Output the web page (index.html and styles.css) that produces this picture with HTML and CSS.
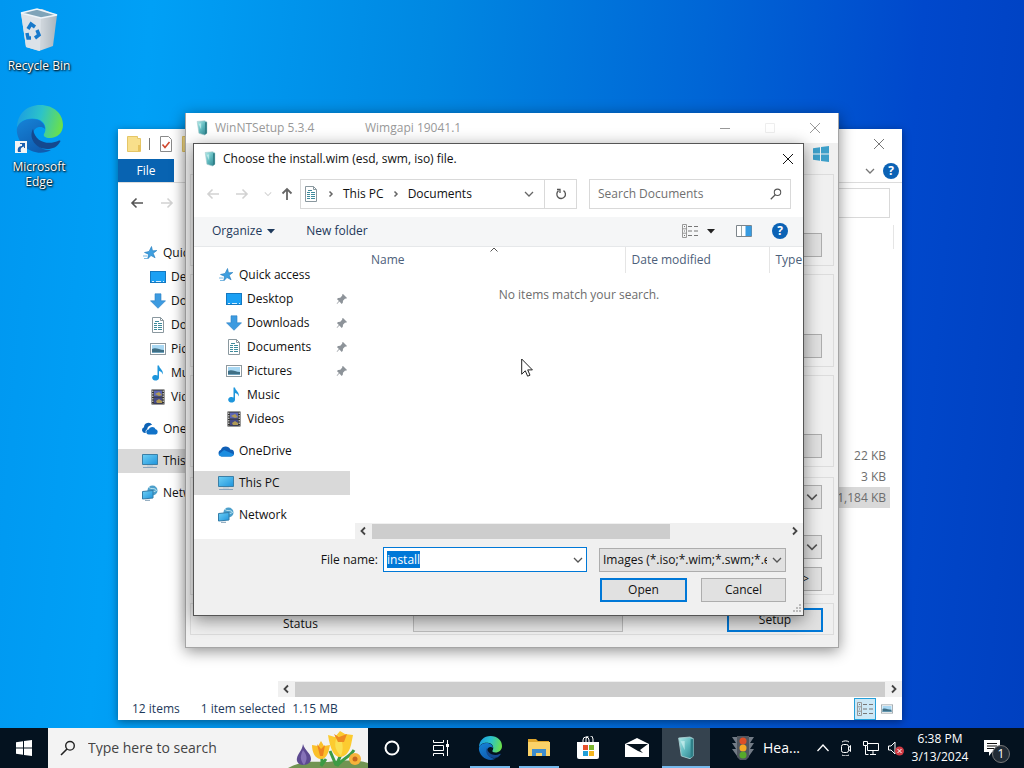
FILE: index.html
```html
<!DOCTYPE html>
<html lang="en">
<head>
  <meta charset="UTF-8">
  <meta name="viewport" content="width=device-width, initial-scale=1.0">
  <title>WinNTSetup</title>
  <link rel="stylesheet" href="styles.css">
</head>
<body>
  <!-- Shared icons -->
  <svg class="defs" aria-hidden="true">
    <defs>
      <linearGradient id="screenFill" x1="0" y1="0" x2="1" y2="1">
        <stop offset="0" stop-color="#6fd0f5"/><stop offset="1" stop-color="#1f94dc"/>
      </linearGradient>
      <linearGradient id="edgeTop" x1="0" y1="0.3" x2="1" y2="0.5">
        <stop offset="0" stop-color="#1b9de2"/><stop offset="0.5" stop-color="#2cc3c9"/><stop offset="1" stop-color="#6be04a"/>
      </linearGradient>
      <linearGradient id="edgeBody" x1="0" y1="0" x2="0.6" y2="1">
        <stop offset="0" stop-color="#1684d8"/><stop offset="1" stop-color="#0f5cb0"/>
      </linearGradient>
      <linearGradient id="boxFill" x1="0" y1="0" x2="1" y2="1">
        <stop offset="0" stop-color="#b5ecea"/><stop offset="0.5" stop-color="#5fb9be"/><stop offset="1" stop-color="#2b7f8c"/>
      </linearGradient>
      <linearGradient id="binFill" x1="0" y1="0" x2="1" y2="0">
        <stop offset="0" stop-color="#e4e9ee"/><stop offset="0.6" stop-color="#cdd4da"/><stop offset="1" stop-color="#a9b4bd"/>
      </linearGradient>
    </defs>
    <symbol id="star" viewBox="0 0 16 16"><path d="M9.500 1.500l1 4.300 4.300-.3-3.600 2.800 1.900 4.500-4.100-2.300-3.300 3.400.8-4.700-4-1.700 4.600-1.100z" fill="#3e9fe0" stroke="#2078bb" stroke-width=".6"/><path d="M1 11h4M2 13.500h3" stroke="#79b9e4"/></symbol>
    <symbol id="desktop" viewBox="0 0 16 16"><rect x=".5" y="2.500" width="15" height="11" fill="#1ba0f4" stroke="#1478c0"/><path d="M2 12.500h2M6 12.500h5M13 12.500h1" stroke="#d8f0ff"/></symbol>
    <symbol id="download" viewBox="0 0 16 16"><path d="M5 .8h6v7h4.500L8 15.300.5 7.800H5z" fill="#3d9be0" stroke="#2a7fc4" stroke-width=".6"/></symbol>
    <symbol id="document" viewBox="0 0 16 16"><path d="M2.500.5h8l3 3v12h-11z" fill="#fff" stroke="#8a989f"/><path d="M10.500.5v3h3" fill="none" stroke="#8a989f"/><path d="M4 6.500h3M4 8.500h3M8 6.500h4M8 8.500h4M4 10.500h3M8 10.500h4M4 12.500h3M8 12.500h4M5 4.500h4" stroke="#3f8b9c"/></symbol>
    <symbol id="picture" viewBox="0 0 16 16"><rect x=".5" y="2.500" width="15" height="11" fill="#fff" stroke="#8e999f"/><path d="M2 4h12v8H2z" fill="#a9d8f3"/><path d="M2 8c4-2 7 1 12 1v3H2z" fill="#3f6f85"/><path d="M2 11h12v1H2z" fill="#6fa3be"/></symbol>
    <symbol id="music" viewBox="0 0 16 16"><path d="M7.500.5H9c.4 3.500 5 4.500 3.500 9-.3-2-1.500-3.200-3.500-3.500V13a3.400 2.800 0 1 1-1.500-2.600z" fill="#1e96dc"/></symbol>
    <symbol id="video" viewBox="0 0 16 16"><path d="M1.500.5h13v15h-13z" fill="#333"/><path d="M4 1.500h8v6H4z" fill="#5c66b5"/><path d="M4 8.500h8v6H4z" fill="#454a86"/><path d="M5 5l4-2 3 3-3 1zM6 12l3-2 3 2v2H7z" fill="#b09a55"/><path d="M2.800 1.500v13M13.200 1.500v13" stroke="#eee" stroke-dasharray="1.500 1"/></symbol>
    <symbol id="onedrive" viewBox="0 0 16 16"><path d="M3.500 13.500a3.500 3.500 0 0 1-.6-6.800A5.200 5.200 0 0 1 12.300 6.500a3.500 3.500 0 0 1 .4 7z" fill="#0f5fb6"/><path d="M6 7l9.700 4.200a3.200 3.200 0 0 1-3 2.300H3.500a3.400 3.400 0 0 1-3-2z" fill="#1b8de0"/></symbol>
    <symbol id="clouds" viewBox="0 0 16 16"><path d="M2.800 12A3 3 0 0 1 2 6.200 4.400 4.400 0 0 1 10.200 4C7 4 5.300 6.500 5.300 8.200 3.600 9 3.300 10.500 3.800 12z" fill="#0c62b5"/><path d="M7 13.500a2.500 2.500 0 0 1-.4-5 3.700 3.700 0 0 1 7-.2 2.700 2.700 0 0 1 .2 5.200z" fill="#1172c8"/></symbol>
    <symbol id="pc" viewBox="0 0 16 16"><path d="M.5 1.500h15v10H.5z" fill="url(#screenFill)" stroke="#3b7fa6"/><path d="M1 14.500h14" stroke="#8aa4bb"/><path d="M5 13h6" stroke="#b4c5d3"/></symbol>
    <symbol id="network" viewBox="0 0 16 16"><circle cx="10.500" cy="5.500" r="5" fill="#4c9fcb"/><path d="M7 2.500c2 2 4 0 7 2M9 9c1-3 4-2 6-4" stroke="#b9e2ef" fill="none"/><path d="M.5 6.500l10.500-1v7.500l-10.500 1z" fill="url(#screenFill)" stroke="#337ca8"/><path d="M3 15.300h5" stroke="#7d9db4"/></symbol>
    <symbol id="pin" viewBox="0 0 12 12"><path d="M7 1l4 4-1 .8-.9-.2L7 7.800l-.2 2L5.700 11 3.400 8.600 1 11l-.3-.4L2.900 8 .9 5.900 2.200 5l2.100-.2 2-2.200L6 1.800z" fill="#8d9399"/></symbol>
    <symbol id="box" viewBox="0 0 16 18"><path d="M2.500 1.500L11 .8l2.500 1.200v13L11 17l-6.500-2z" fill="url(#boxFill)" stroke="#a5c9cc" stroke-width=".7"/><path d="M11.500 2.500v14l2-1.500V2.300z" fill="#2f7f87"/><path d="M4 4l3-.3v7z" fill="#dbf8f6" opacity=".6"/></symbol>
    <symbol id="edge" viewBox="0 0 48 48"><path d="M2 23C2 9 12 0 25 0c14 0 23 9 23 20 0 8-6 13-13 13-5 0-7-2-6-4 3-4 2-13-7-15C13 12 4 16 2 23z" fill="url(#edgeTop)"/><path d="M2 23c2-6 8-9 15-9 9 0 13 5 13 10-4-4-12-2-12 6 0 9 9 16 18 15-8 5-20 3-27-4-5-5-8-12-7-18z" fill="url(#edgeBody)"/><path d="M18 24c-5 9 3 20 14 20 6 0 10-2 13-7 1-1 0-2-2-1-9 4-23 2-25-12z" fill="#14498f"/></symbol>
    <symbol id="winlogo" viewBox="0 0 16 16"><path d="M0 2.300l7-1v6.200H0zM8 1.100L16 0v7.500H8zM0 8.500h7v6.200l-7-1zM8 8.500h8V16l-8-1.100z" fill="currentColor"/></symbol>
    <symbol id="close" viewBox="0 0 12 12"><path d="M1 1l10 10M11 1L1 11" stroke="currentColor" fill="none"/></symbol>
    <symbol id="down" viewBox="0 0 10 10"><path d="M1 3l4 4 4-4" stroke="currentColor" fill="none" stroke-width="1.300"/></symbol>
    <symbol id="right" viewBox="0 0 10 10"><path d="M3 1.500L6.500 5 3 8.500" stroke="currentColor" fill="none" stroke-width="1.800"/></symbol>
    <symbol id="left" viewBox="0 0 10 10"><path d="M7 1.500L3.500 5 7 8.500" stroke="currentColor" fill="none" stroke-width="1.800"/></symbol>
    <symbol id="crumb" viewBox="0 0 10 10"><path d="M3.500 2.500L6 5 3.500 7.500" stroke="currentColor" fill="none" stroke-width="1.500"/></symbol>
    <symbol id="back" viewBox="0 0 14 12"><path d="M13 6H2M6.500 1.500L2 6l4.500 4.500" stroke="currentColor" fill="none" stroke-width="1.600"/></symbol>
    <symbol id="forward" viewBox="0 0 14 12"><path d="M1 6h11M7.500 1.500L12 6l-4.500 4.500" stroke="currentColor" fill="none" stroke-width="1.600"/></symbol>
    <symbol id="up" viewBox="0 0 12 14"><path d="M6 13V2M1.500 6.500L6 2l4.500 4.500" stroke="currentColor" fill="none" stroke-width="1.800"/></symbol>
    <symbol id="caret" viewBox="0 0 8 8"><path d="M0 2h8L4 6.500z" fill="currentColor"/></symbol>
    <symbol id="folder" viewBox="0 0 14 16"><path d="M.5.5h10v2h3v13h-13z" fill="#f8df8b" stroke="#e5c667"/><path d="M11 9h3v6h-3z" fill="#e7c25c"/></symbol>
    <symbol id="lens" viewBox="0 0 16 16"><circle cx="10" cy="5.800" r="4.300" stroke="currentColor" fill="none" stroke-width="1.400"/><path d="M7 9l-6 6" stroke="currentColor" stroke-width="1.600"/></symbol>
    <symbol id="details" viewBox="0 0 18 14"><path d="M1.500.5h4v13h-4zM1.500 4.800h4M1.500 9.200h4" fill="none" stroke="#999"/><path d="M3 2.500h1M3 7h1M3 11.500h1M7 2.500h4M13 2.500h4M7 7h4M13 7h4M7 11.500h4M13 11.500h4" stroke="#777"/></symbol>
  </svg>

  <main class="desktop">
    <nav class="shortcuts">
      <a href="#" class="shortcut">
        <svg viewBox="0 0 40 44" class="shortcut-icon"><path d="M2 5l5 34 13 4 14-5 4-31-15-6z" fill="url(#binFill)"/><path d="M2 5l20 4-1 34-14-4z" fill="#dce2e8"/><path d="M2 5L18 1l20 6-16 3z" fill="#7fa4b9" stroke="#eef5fa" stroke-width="1.500"/><g fill="none" stroke="#1779cb" stroke-width="3.500"><path d="M9 21l3-5 4 3"/><path d="M18 22l2 5-4 3"/><path d="M12 30H9l-1-5"/></g></svg>
        <span>Recycle Bin</span>
      </a>
      <a href="#" class="shortcut">
        <span class="edge-wrap">
          <svg class="edge-icon"><use href="#edge"/></svg>
          <svg class="link-arrow" viewBox="0 0 12 12"><rect width="12" height="12" fill="#f4f4f4"/><path d="M3 11c-1-4 1-6 4-6V3H5V2h5v5H9V5.500C6 6 5 8 6 11z" fill="#1d5fae"/></svg>
        </span>
        <span>Microsoft Edge</span>
      </a>
    </nav>

    <!-- File Explorer -->
    <section class="window explorer">
      <header class="explorer-title">
        <svg class="i-folder"><use href="#folder"/></svg>
        <span class="bar"></span>
        <svg class="i-check" viewBox="0 0 12 16"><path d="M.5.5h8l3 3v12H.5z" fill="#fff" stroke="#8a8a8a"/><path d="M2.500 8.500l2.500 3L9.500 6" fill="none" stroke="#d0492f" stroke-width="1.600"/></svg>
        <svg class="i-folder"><use href="#folder"/></svg>
        <button class="icon-button push gray" aria-label="Close"><svg class="i12"><use href="#close"/></svg></button>
      </header>
      <div class="ribbon">
        <button class="file-tab">File</button>
        <svg class="i10 push gray"><use href="#down"/></svg>
        <button class="help" aria-label="Help">?</button>
      </div>
      <div class="explorer-nav">
        <button class="icon-button" aria-label="Back"><svg class="i14"><use href="#back"/></svg></button>
        <button class="icon-button faint" aria-label="Forward"><svg class="i14"><use href="#forward"/></svg></button>
        <input class="explorer-search" type="text" aria-label="Search">
      </div>
      <div class="explorer-body">
        <ul class="tree explorer-tree">
          <li><svg><use href="#star"/></svg>Quick access</li>
          <li class="child"><svg><use href="#desktop"/></svg>Desktop</li>
          <li class="child"><svg><use href="#download"/></svg>Downloads</li>
          <li class="child"><svg><use href="#document"/></svg>Documents</li>
          <li class="child"><svg><use href="#picture"/></svg>Pictures</li>
          <li class="child"><svg><use href="#music"/></svg>Music</li>
          <li class="child"><svg><use href="#video"/></svg>Videos</li>
          <li class="root"><svg><use href="#clouds"/></svg>OneDrive</li>
          <li class="root current"><svg><use href="#pc"/></svg>This PC</li>
          <li class="root"><svg><use href="#network"/></svg>Network</li>
        </ul>
        <div class="explorer-files">
          <table class="sizes">
            <thead><tr><th>Size</th></tr></thead>
            <tbody>
              <tr><td>22 KB</td></tr>
              <tr><td>3 KB</td></tr>
              <tr class="picked"><td>1,184 KB</td></tr>
            </tbody>
          </table>
          <div class="scroll">
            <svg class="i10"><use href="#left"/></svg>
            <span class="track"><span class="thumb full"></span></span>
            <svg class="i10"><use href="#right"/></svg>
          </div>
        </div>
      </div>
      <footer class="statusbar">
        <span>12 items</span>
        <span class="selected-count">1 item selected</span>
        <span>1.15 MB</span>
        <button class="view-button active push" aria-label="Details"><svg class="i-details"><use href="#details"/></svg></button>
        <button class="view-button" aria-label="Thumbnails"><svg class="i14"><use href="#picture"/></svg></button>
      </footer>
    </section>

    <!-- WinNTSetup -->
    <section class="window setup">
      <header class="setup-title">
        <svg class="i-box"><use href="#box"/></svg>
        <span class="setup-name">WinNTSetup 5.3.4</span>
        <span>Wimgapi 19041.1</span>
        <span class="window-buttons">
          <button class="icon-button" aria-label="Minimize"><svg class="i12" viewBox="0 0 12 12"><path d="M1 6.500h10" stroke="currentColor"/></svg></button>
          <button class="icon-button disabled" aria-label="Maximize"><svg class="i12" viewBox="0 0 12 12"><path d="M1.500 1.500h9v9h-9z" fill="none" stroke="currentColor"/></svg></button>
          <button class="icon-button" aria-label="Close"><svg class="i12"><use href="#close"/></svg></button>
        </span>
      </header>
      <div class="setup-body">
        <div class="logo-row"><svg class="i16"><use href="#winlogo"/></svg></div>
        <div class="group"><button class="field" aria-label="Browse"></button></div>
        <div class="group"><button class="field" aria-label="Browse"></button></div>
        <div class="group"><button class="field" aria-label="Browse"></button></div>
        <div class="group options">
          <button class="field" aria-label="Edition"><svg class="i12"><use href="#down"/></svg></button>
          <button class="field" aria-label="Drive"><svg class="i12"><use href="#down"/></svg></button>
          <button class="field tight">&lt;&gt;</button>
        </div>
        <div class="group bottom">
          <span class="status">Status</span>
          <span class="progress"></span>
          <button class="start">Setup</button>
        </div>
      </div>
    </section>

    <!-- Open file dialog -->
    <section class="window dialog" role="dialog" aria-labelledby="dialogTitle">
      <header class="dialog-title">
        <svg class="i-box"><use href="#box"/></svg>
        <span id="dialogTitle">Choose the install.wim (esd, swm, iso) file.</span>
        <button class="icon-button push" aria-label="Close"><svg class="i12"><use href="#close"/></svg></button>
      </header>
      <div class="dialog-nav">
        <div class="arrows">
          <svg class="i14 faint"><use href="#back"/></svg>
          <svg class="i14 faint"><use href="#forward"/></svg>
          <svg class="i8 faint"><use href="#down"/></svg>
          <svg class="i-up"><use href="#up"/></svg>
        </div>
        <div class="address">
          <svg class="i16"><use href="#document"/></svg>
          <svg class="i10 sep"><use href="#crumb"/></svg>
          <a href="#">This PC</a>
          <svg class="i10 sep"><use href="#crumb"/></svg>
          <a href="#">Documents</a>
          <svg class="i10 sep push"><use href="#down"/></svg>
          <button class="refresh" aria-label="Refresh"><svg class="i12" viewBox="0 0 12 12"><path d="M3.500 2.800A4.300 4.300 0 1 0 8.500 2.600M2 1.500h3v3.500" fill="none" stroke="currentColor" stroke-width="1.300"/></svg></button>
        </div>
        <div class="search">
          <input type="text" placeholder="Search Documents" aria-label="Search Documents">
          <svg class="i12"><use href="#lens"/></svg>
        </div>
      </div>
      <div class="commands">
        <button class="organize">Organize <svg class="i8"><use href="#caret"/></svg></button>
        <button>New folder</button>
        <button class="push views" aria-label="Change view"><svg class="i-details"><use href="#details"/></svg><svg class="i8 dark"><use href="#caret"/></svg></button>
        <button aria-label="Preview pane"><svg class="i16" viewBox="0 0 16 16"><path d="M.5 2.500h15v11H.5z" fill="#fff" stroke="#7d858b"/><path d="M5.500 3v10" stroke="#9aa"/><path d="M9.500 3h6v10h-6z" fill="#389be0"/></svg></button>
        <button class="help" aria-label="Help">?</button>
      </div>
      <div class="dialog-body">
        <ul class="tree dialog-tree">
          <li><svg><use href="#star"/></svg>Quick access</li>
          <li class="child"><svg><use href="#desktop"/></svg>Desktop<svg class="pin"><use href="#pin"/></svg></li>
          <li class="child"><svg><use href="#download"/></svg>Downloads<svg class="pin"><use href="#pin"/></svg></li>
          <li class="child"><svg><use href="#document"/></svg>Documents<svg class="pin"><use href="#pin"/></svg></li>
          <li class="child"><svg><use href="#picture"/></svg>Pictures<svg class="pin"><use href="#pin"/></svg></li>
          <li class="child"><svg><use href="#music"/></svg>Music</li>
          <li class="child"><svg><use href="#video"/></svg>Videos</li>
          <li class="root"><svg><use href="#onedrive"/></svg>OneDrive</li>
          <li class="root current"><svg><use href="#pc"/></svg>This PC</li>
          <li class="root"><svg><use href="#network"/></svg>Network</li>
        </ul>
        <div class="dialog-files">
          <table class="files">
            <thead>
              <tr><th>Name<svg class="sort" viewBox="0 0 8 5"><path d="M.5 4.500L4 1l3.500 3.500" fill="none" stroke="#555"/></svg></th><th class="date">Date modified</th><th class="type">Type</th></tr>
            </thead>
            <tbody><tr><td colspan="3">No items match your search.</td></tr></tbody>
          </table>
          <div class="scroll">
            <svg class="i10"><use href="#left"/></svg>
            <span class="track"><span class="thumb"></span></span>
            <svg class="i10"><use href="#right"/></svg>
          </div>
        </div>
      </div>
      <form class="dialog-footer" onsubmit="return false">
        <label for="fileName">File name:</label>
        <div class="combo">
          <input id="fileName" type="text" value="install" autocomplete="off" spellcheck="false">
          <svg class="i10"><use href="#down"/></svg>
        </div>
        <div class="filter">
          <select aria-label="File type"><option>Images (*.iso;*.wim;*.swm;*.esd)</option></select>
          <svg class="i10"><use href="#down"/></svg>
        </div>
        <div class="actions">
          <button class="primary">Open</button>
          <button type="button">Cancel</button>
        </div>
      </form>
      <svg class="grip" viewBox="0 0 9 9"><path d="M7 1h2M4 4h2M7 4h2M1 7h2M4 7h2M7 7h2" stroke="#bbb" stroke-width="2"/></svg>
    </section>

    <svg class="cursor" viewBox="0 0 12 20"><path d="M.7 1v15.200l3.600-3.400 2.300 5.400 2.400-1-2.300-5.300h4.700z" fill="#fff" stroke="#222"/></svg>
  </main>

  <footer class="taskbar">
    <button class="task" aria-label="Start"><svg class="i16"><use href="#winlogo"/></svg></button>
    <label class="task-search">
      <svg class="i16"><use href="#lens"/></svg>
      <input type="text" placeholder="Type here to search" aria-label="Search">
      <svg class="flowers" viewBox="0 0 80 38">
        <path d="M0 38c14-8 28-6 40-6 16-2 30-2 40 1v5z" fill="#719452"/>
        <path d="M15 14c2 7 8 9 8 15 0 4-4 6-8 6s-7-3-6-7c1-5 5-7 6-14z" fill="#5d4a91"/><path d="M15 20c4 5 5 9 1 15-4-5-4-9-1-15z" fill="#8673b7"/>
        <path d="M33 24c1 5 2 8 0 12M54 20c-1 7-4 10-6 16M38 29l-5 7M66 20c-4 7-12 9-17 16M42 21l6 14" stroke="#3c9b45" stroke-width="3" fill="none"/>
        <path d="M24 15l6 1 3-5 3 5 6-1c-1 6-3 14-9 14s-9-7-9-14z" fill="#fbc02b"/><path d="M29 14l4 5 4-4-2 11h-3z" fill="#ee8320"/>
        <path d="M40 5l7 2 5-6 5 3 8 1-2 10c-2 8-6 12-11 12-6 0-10-8-12-22z" fill="#fccb30"/><path d="M50 5c-5 9-3 15 3 21 3-8 2-15-3-21z" fill="#fae052"/><path d="M46 4l5 3 8-3-3 8h-6z" fill="#ee8a21"/>
        <circle cx="67" cy="29" r="6" fill="#f6b33a"/><circle cx="67" cy="29" r="2.500" fill="#c5681d"/>
      </svg>
    </label>
    <button class="task" aria-label="Cortana"><svg class="i16" viewBox="0 0 16 16"><circle cx="8" cy="8" r="6.500" fill="none" stroke="#fff" stroke-width="2"/></svg></button>
    <button class="task" aria-label="Task View"><svg class="i16" viewBox="0 0 16 16"><path d="M.5 0v2.500h10V0M.5 16v-2.500h10V16M.5 5.500h10v5H.5zM14.500 0v16" fill="none" stroke="#fff"/><path d="M13 4h3v3h-3z" fill="#fff"/></svg></button>
    <button class="task running" aria-label="Microsoft Edge"><svg class="i24"><use href="#edge"/></svg></button>
    <button class="task running" aria-label="File Explorer"><svg class="i24" viewBox="0 0 24 24"><path d="M1 3h8l2 2h11v3H1z" fill="#dfa52b"/><path d="M1 6h22v14H1z" fill="#fbd268"/><path d="M5 13h14v7h-4v-3H9v3H5z" fill="#3e8dce"/></svg></button>
    <button class="task" aria-label="Microsoft Store"><svg class="i24" viewBox="0 0 24 24"><path d="M7 6V4a3 3 0 0 1 6 0v2M10 6V3a3.500 3.500 0 0 1 7 0v3" fill="none" stroke="#fff"/><path d="M1 6h22v15a2 2 0 0 1-2 2H3a2 2 0 0 1-2-2z" fill="#fff"/><path d="M7 9h5v5H7z" fill="#e8502a"/><path d="M13 9h5v5h-5z" fill="#7db72f"/><path d="M7 15h5v5H7z" fill="#219fd9"/><path d="M13 15h5v5h-5z" fill="#f4b51e"/></svg></button>
    <button class="task" aria-label="Mail"><svg class="i24" viewBox="0 0 24 24"><path d="M0 8l12-6 12 6v13H0z" fill="#fff"/><path d="M1 8h22l-8 6 3 3-5-2z" fill="#06131e"/></svg></button>
    <button class="task running current" aria-label="WinNTSetup"><svg class="i24"><use href="#box"/></svg></button>
    <button class="news">
      <svg class="i24" viewBox="0 0 24 24"><path d="M1 1h22l-4 6h4l-4 6h4l-5 7H6l-5-7h4L1 7h4z" fill="#727b86"/><path d="M6 0h12v21l-3 3H9l-3-3z" fill="#50565f"/><circle cx="12" cy="5" r="3.500" fill="#dc4f28"/><circle cx="12" cy="12" r="3.500" fill="#f5a925"/><circle cx="12" cy="19" r="3.500" fill="#56aa2b"/></svg>
      Hea...
    </button>
    <div class="tray">
      <svg class="i12" viewBox="0 0 12 12"><path d="M.5 9L6 3l5.500 6" fill="none" stroke="#fff" stroke-width="1.300"/></svg>
      <svg class="i16" viewBox="0 0 16 16"><rect x="3.500" y="4.500" width="7" height="8" rx="2" fill="none" stroke="#fff"/><path d="M10.500 8l2-2.500v6l-2-2.500M4 2c2-1.500 5-1.500 7 0M4 15c2 1.300 5 1.300 7 0" fill="none" stroke="#fff"/></svg>
      <svg class="i16" viewBox="0 0 16 16"><path d="M5 3.500h10.500v7H4.500V6M10 11v3M7 14.500h6M.5 1.500h4v4h-4zM2.500 5v9.500h3" fill="none" stroke="#fff"/></svg>
      <svg class="i16" viewBox="0 0 16 16"><path d="M.5 6h2.500L7 2v12l-4-4H.5z" fill="none" stroke="#fff"/><circle cx="11.500" cy="11" r="4.500" fill="#d03a43"/><path d="M9.500 9l4 4M13.500 9l-4 4" stroke="#fff"/></svg>
    </div>
    <time class="clock"><span>6:38 PM</span><span>3/13/2024</span></time>
    <button class="notifications" aria-label="Notifications">
      <svg class="i16" viewBox="0 0 16 16"><path d="M0 0h16v12H8l-3 4v-4H0z" fill="#fff"/><path d="M3 3.500h10M3 6h10M3 8.500h7" stroke="#111"/></svg>
      <span class="badge">1</span>
    </button>
  </footer>

  <script>
    // The dialog opens with the file name selected
    const fileName = document.getElementById("fileName");
    fileName.focus();
    fileName.select();
  </script>
</body>
</html>
```

FILE: styles.css
```css
* {
  box-sizing: border-box;
}
body {
  margin: 0;
  min-height: 100vh;
  display: flex;
  flex-direction: column;
  font-family: "Open Sans", "Noto Sans", sans-serif;
  font-size: 12px;
  line-height: 16px;
  color: #111;
}
button, input, select {
  font: inherit;
  color: inherit;
}
button {
  padding: 0;
  border: none;
  background: none;
}
input:focus, select:focus {
  outline: none;
}
::selection {
  background: #0078d7;
  color: #fff;
}
svg {
  flex: none;
  display: block;
}
a {
  color: inherit;
  text-decoration: none;
}
.defs {
  position: absolute;
  width: 0;
  height: 0;
}

/* Icon sizes */
.i8 { width: 8px; height: 8px; }
.i10 { width: 10px; height: 10px; }
.i12 { width: 12px; height: 12px; }
.i14 { width: 14px; height: 12px; }
.i16 { width: 16px; height: 16px; }
.i24 { width: 24px; height: 24px; }
.i-box { width: 14px; height: 16px; }
.i-folder { width: 14px; height: 16px; }
.i-check { width: 12px; height: 16px; }
.i-up { width: 12px; height: 14px; }
.i-details { width: 18px; height: 14px; }
.push { margin-left: auto; }
.gray { color: #777; }
.faint { color: #d2d2d2; }
.dark { color: #222; }
.icon-button {
  display: flex;
}
.help {
  width: 16px;
  height: 16px;
  border-radius: 50%;
  background: #0b62b5;
  color: #fff;
  font-weight: bold;
}

/* Desktop */
.desktop {
  flex: 1;
  position: relative;
  min-height: 728px;
  overflow: hidden;
  background: linear-gradient(95deg, #0097f0 0%, #00a0f6 14%, #0088e2 40%, #0066d6 65%, #0048cc 85%, #0040c0 100%);
}
.shortcuts {
  width: 78px;
  padding-top: 8px;
  display: flex;
  flex-direction: column;
  gap: 32px;
}
.shortcut {
  display: flex;
  flex-direction: column;
  align-items: center;
  text-align: center;
  line-height: 15px;
  gap: 6px;
  color: #fff;
  text-shadow: 1px 1px 2px #000, 0 0 2px #000;
}
.shortcut-icon {
  width: 40px;
  height: 44px;
}
.edge-wrap {
  position: relative;
}
.edge-icon {
  width: 48px;
  height: 48px;
}
.link-arrow {
  position: absolute;
  left: 0;
  bottom: 0;
  width: 12px;
  height: 12px;
}
.window {
  position: absolute;
  display: flex;
  flex-direction: column;
}

/* Navigation trees */
.tree {
  margin: 0;
  padding: 0;
  list-style: none;
  flex: none;
}
.tree li {
  display: flex;
  align-items: center;
  gap: 5px;
  height: 24px;
  padding-left: 24px;
  white-space: nowrap;
}
.tree li.child {
  padding-left: 32px;
}
.tree li.root {
  margin-top: 8px;
}
.tree li.current {
  background: #d9d9d9;
}
.tree svg {
  width: 16px;
  height: 16px;
}
.tree .pin {
  width: 12px;
  height: 12px;
  margin-left: auto;
  margin-right: 2px;
}

/* Scroll bars */
.scroll {
  display: flex;
  align-items: center;
  height: 16px;
  padding: 0 3px;
  gap: 4px;
  background: #f0f0f0;
  color: #444;
}
.track {
  flex: 1;
  height: 15px;
}
.thumb {
  display: block;
  width: 72%;
  height: 100%;
  background: #cdcdcd;
}
.thumb.full {
  width: 100%;
}

/* File Explorer */
.explorer {
  left: 118px;
  right: 122px;
  top: 129px;
  bottom: 8px;
  background: #fff;
  box-shadow: 0 2px 8px rgba(0, 0, 0, 0.4);
}
.explorer-title {
  display: flex;
  align-items: center;
  gap: 10px;
  height: 30px;
  padding: 0 17px 0 9px;
}
.bar {
  width: 1px;
  height: 12px;
  margin-left: -2px;
  background: #777;
}
.ribbon {
  display: flex;
  align-items: center;
  gap: 8px;
  height: 24px;
  padding-right: 3px;
  border-bottom: 1px solid #dcdcdc;
}
.file-tab {
  width: 56px;
  height: 23px;
  background: #0863b1;
  color: #fff;
}
.explorer-nav {
  display: flex;
  align-items: center;
  gap: 16px;
  height: 40px;
  padding: 0 12px;
  color: #555;
}
.explorer-search {
  flex: 1;
  height: 30px;
  border: 1px solid #d9d9d9;
}
.explorer-body {
  flex: 1;
  display: flex;
}
.explorer-tree {
  width: 160px;
  padding-top: 18px;
}
.explorer-files {
  flex: 1;
  display: flex;
  flex-direction: column;
  justify-content: space-between;
}
.sizes {
  align-self: flex-end;
  width: 84px;
  margin: 2px 8px 0 0;
  border-spacing: 0;
  color: #6d6d6d;
}
.sizes th {
  height: 24px;
  padding: 0 6px;
  border-right: 1px solid #e5e5e5;
  font-weight: normal;
  text-align: left;
}
.sizes td {
  height: 21px;
  padding: 0 4px 0 0;
  border-right: 4px solid #fff;
  text-align: right;
}
.sizes tbody::before {
  content: "";
  display: block;
  height: 196px;
}
.sizes .picked td {
  background: #d9d9d9;
}
.statusbar {
  display: flex;
  align-items: center;
  height: 23px;
  padding: 0 4px 0 14px;
  color: #1e395b;
}
.selected-count {
  margin: 0 7px 0 21px;
}
.view-button {
  display: flex;
  align-items: center;
  justify-content: center;
  width: 22px;
  height: 22px;
}
.view-button.active {
  background: #cce8f6;
  border: 1px solid #26a0da;
}

/* WinNTSetup */
.setup {
  left: 185px;
  right: 185px;
  top: 113px;
  bottom: 80px;
  border: 1px solid #a5a5a5;
  border-top: none;
  background: #f0f0f0;
  box-shadow: 0 3px 14px rgba(0, 0, 0, 0.45);
}
.setup-title {
  display: flex;
  align-items: center;
  height: 30px;
  padding: 0 17px 0 9px;
  background: #fff;
  color: #999;
}
.setup-name {
  width: 150px;
  margin-left: 6px;
}
.window-buttons {
  display: flex;
  gap: 33px;
  margin-left: auto;
}
.disabled {
  color: #eee;
}
.setup-body {
  flex: 1;
  display: flex;
  flex-direction: column;
  gap: 8px;
  padding: 3px 4px 12px;
}
.logo-row {
  display: flex;
  justify-content: flex-end;
  height: 20px;
  padding-right: 5px;
  color: #3d9fc9;
}
.group {
  flex: 1 0 92px;
  display: flex;
  flex-direction: column;
  align-items: flex-end;
  justify-content: flex-end;
  padding: 0 11px 8px;
  border: 1px solid #dcdcdc;
}
.field {
  display: flex;
  align-items: center;
  justify-content: flex-end;
  width: 60px;
  height: 24px;
  padding-right: 3px;
  border: 1px solid #adadad;
  background: #e1e1e1;
}
.field svg {
  color: #555;
}
.group.options {
  flex: 1 0 118px;
  gap: 26px;
  margin-top: 2px;
  padding-bottom: 3px;
}
.field.tight {
  margin-top: -18px;
  padding-right: 12px;
}
.group.bottom {
  flex: 0 0 32px;
  flex-direction: row;
  align-items: flex-end;
  justify-content: flex-start;
  padding: 0 10px 2px 12px;
}
.status {
  width: 130px;
  margin-left: 80px;
}
.progress {
  width: 210px;
  height: 20px;
  border: 1px solid #bcbcbc;
  background: #e6e6e6;
}
.start {
  width: 96px;
  height: 24px;
  margin-left: auto;
  border: 2px solid #0078d7;
  background: #e1e1e1;
}

/* Open file dialog */
.dialog {
  left: 193px;
  right: 220px;
  top: 143px;
  bottom: 112px;
  border: 1px solid #555;
  background: #fff;
  box-shadow: 0 4px 16px rgba(0, 0, 0, 0.45);
}
.dialog-title {
  display: flex;
  align-items: center;
  gap: 6px;
  height: 30px;
  padding: 0 9px;
}
.dialog-nav {
  display: flex;
  align-items: center;
  gap: 12px;
  height: 43px;
  padding: 0 12px 3px;
}
.arrows {
  flex: none;
  display: flex;
  align-items: center;
  width: 82px;
  gap: 15px;
  color: #666;
}
.arrows .i-up {
  margin-left: -6px;
}
.address {
  flex: 1;
  display: flex;
  align-items: center;
  gap: 7px;
  height: 30px;
  padding-left: 2px;
  border: 1px solid #d9d9d9;
}
.sep {
  color: #666;
}
.refresh {
  display: flex;
  align-items: center;
  justify-content: center;
  width: 32px;
  height: 28px;
  margin-left: 3px;
  border-left: 1px solid #d9d9d9;
  color: #555;
}
.search {
  flex: none;
  display: flex;
  align-items: center;
  width: 202px;
  height: 30px;
  padding: 0 8px;
  border: 1px solid #d9d9d9;
  color: #555;
}
.search input {
  flex: 1;
  min-width: 0;
  padding: 0;
  border: none;
}
.search input::placeholder {
  color: #707070;
}
.commands {
  display: flex;
  align-items: center;
  height: 30px;
  padding: 0 15px 1px 18px;
  border-bottom: 1px solid #e6e8ea;
  background: #f5f6f7;
  color: #1e395b;
}
.organize, .views {
  display: flex;
  align-items: center;
  gap: 5px;
}
.organize {
  margin-right: 31px;
}
.views {
  gap: 8px;
  margin-right: 21px;
}
.commands .help {
  margin-left: 20px;
}
.dialog-body {
  flex: 1;
  display: flex;
}
.dialog-tree {
  width: 156px;
  padding-top: 16px;
}
.dialog-files {
  flex: 1;
  display: flex;
  flex-direction: column;
  justify-content: space-between;
  margin-left: 5px;
}
.files {
  width: 100%;
  table-layout: fixed;
  border-collapse: collapse;
}
.files th {
  position: relative;
  height: 26px;
  padding: 0 0 0 6px;
  border-right: 1px solid #e5e5e5;
  font-weight: normal;
  text-align: left;
  color: #4c607a;
}
.files th:first-child {
  padding-left: 16px;
}
.files .date {
  width: 144px;
}
.files .type {
  width: 34px;
  border-right: none;
}
.sort {
  position: absolute;
  left: 50%;
  top: 0;
  width: 8px;
  height: 5px;
}
.files td {
  height: 44px;
  text-align: center;
  color: #6d6d6d;
}
.dialog-footer {
  display: grid;
  grid-template-columns: 184px 215fr 193fr;
  align-items: center;
  row-gap: 5px;
  height: 76px;
  padding: 8px 17px 13px 0;
  background: #f0f0f0;
}
.dialog-footer label {
  text-align: right;
}
.combo, .filter {
  position: relative;
  display: flex;
  align-items: center;
  height: 25px;
}
.combo {
  margin-left: 5px;
  margin-right: 6px;
}
.filter {
  margin-left: 6px;
}
.combo input {
  width: 100%;
  height: 25px;
  padding: 0 3px;
  border: 1px solid #0078d7;
  background: #fff;
}
.filter select {
  appearance: none;
  width: 100%;
  height: 24px;
  padding: 0 18px 0 3px;
  border: 1px solid #adadad;
  border-radius: 0;
  background: #e1e1e1;
}
.combo svg, .filter svg {
  position: absolute;
  right: 4px;
  color: #555;
}
.actions {
  grid-column: 3;
  display: flex;
  gap: 14px;
  margin-left: 7px;
}
.actions button {
  flex: 1;
  height: 24px;
  border: 1px solid #adadad;
  background: #e1e1e1;
}
.actions .primary {
  border: 2px solid #0078d7;
}
.grip {
  position: absolute;
  right: 2px;
  bottom: 2px;
  width: 9px;
  height: 9px;
}
.cursor {
  position: absolute;
  left: 521px;
  top: 358px;
  width: 12px;
  height: 20px;
}

/* Taskbar */
.taskbar {
  display: flex;
  align-items: center;
  height: 40px;
  background: #04121f;
  color: #fff;
}
.task {
  display: flex;
  align-items: center;
  justify-content: center;
  width: 48px;
  height: 40px;
  flex: none;
  margin-right: 1px;
}
.task:first-child {
  margin-right: 0;
}
.task.running {
  background: linear-gradient(#76b9ed, #76b9ed) center bottom / 40px 2px no-repeat;
}
.task.current {
  background-color: #35434f;
  background-size: 100% 2px;
}
.task-search {
  position: relative;
  display: flex;
  align-items: center;
  gap: 12px;
  width: 320px;
  height: 40px;
  flex: none;
  padding-left: 12px;
  background: #f3f3f3;
  color: #222;
}
.task-search input {
  width: 160px;
  padding: 0;
  border: none;
  background: none;
  font-size: 14px;
}
.task-search input::placeholder {
  color: #444;
}
.flowers {
  position: absolute;
  right: 0;
  bottom: 0;
  width: 80px;
  height: 38px;
}
.news {
  display: flex;
  align-items: center;
  gap: 8px;
  margin-left: auto;
  font-size: 14px;
}
.tray {
  display: flex;
  align-items: center;
  gap: 9px;
  margin-left: 17px;
}
.clock {
  display: flex;
  flex-direction: column;
  align-items: center;
  width: 56px;
  margin-left: 8px;
  line-height: 18px;
}
.notifications {
  position: relative;
  width: 40px;
  height: 40px;
  margin-left: 16px;
}
.badge {
  position: absolute;
  left: 8px;
  bottom: 5px;
  width: 18px;
  height: 18px;
  border: 1px solid #777;
  border-radius: 50%;
  background: #222c36;
  font-size: 12px;
  line-height: 16px;
}
```
